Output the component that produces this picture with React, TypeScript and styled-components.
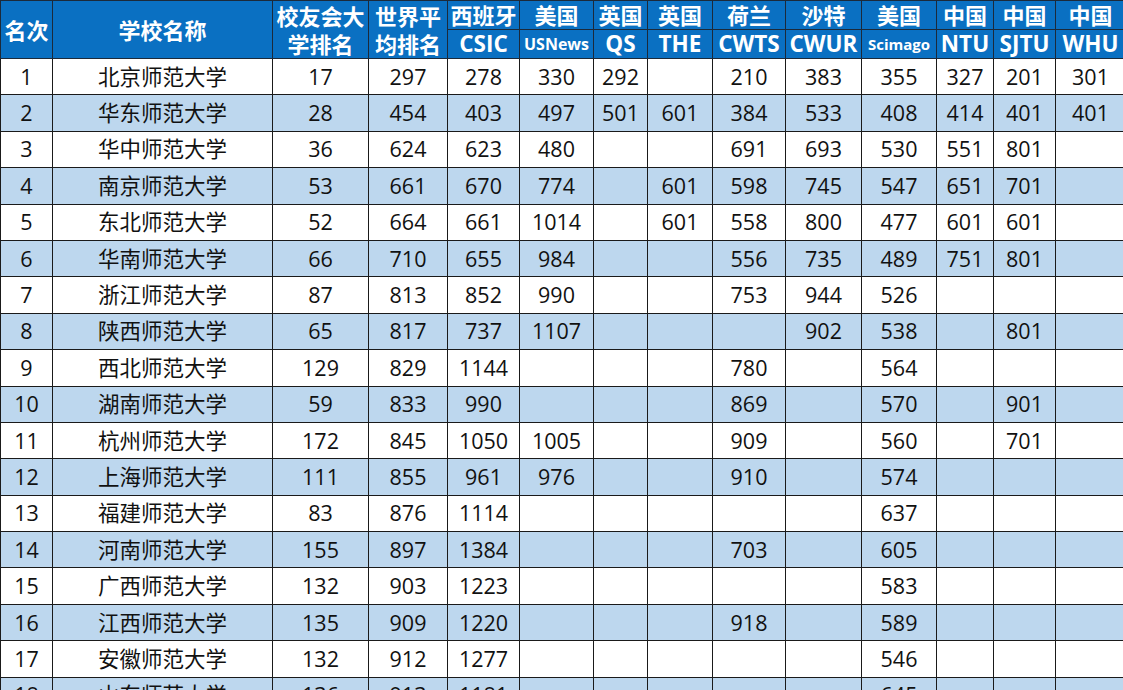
import React from "react";
import styled, { createGlobalStyle } from "styled-components";

const Global = createGlobalStyle`
  html, body { margin: 0; padding: 0; background: #fff; overflow: hidden; }
  body { font-family: "Open Sans", "Noto Sans CJK SC", sans-serif; }
`;

const Frame = styled.div`
  width: 1123px;
  height: 690px;
  overflow: hidden;
`;

const Table = styled.table`
  border-collapse: collapse;
  table-layout: fixed;
  width: 1125px;
  font-family: "Open Sans", "Noto Sans CJK SC", sans-serif;
`;

const HeadRow = styled.tr`
  height: 29px;
`;

const Th = styled.th<{ $small?: number }>`
  background: #0a70c2;
  color: #fff;
  font-weight: 700;
  font-size: ${(p) => p.$small ?? 22}px;
  line-height: 26px;
  height: 28px;
  padding: 0;
  text-align: center;
  vertical-align: middle;
  border: 1px solid #1c2a3a;
  white-space: nowrap;
`;

const WrapTh = styled(Th)`
  white-space: normal;
  word-break: break-all;
  line-height: 28px;
  padding: 0 2px;
`;

const Row = styled.tr<{ $alt: boolean }>`
  height: 36.4px;
  background: ${(p) => (p.$alt ? "#bdd7ee" : "#ffffff")};
`;

const Td = styled.td`
  font-size: 21.5px;
  color: #111;
  text-align: center;
  vertical-align: middle;
  padding: 0;
  border: 1px solid #1a1a1a;
  white-space: nowrap;
  overflow: hidden;
  line-height: 30px;
`;

const widths = [52, 220, 96, 79, 72, 74, 54, 65, 73, 76, 75, 57, 62, 70];

type R = [string, string, ...(string | number)[]];

const rows: R[] = [
  ["1", "北京师范大学", 17, 297, 278, 330, 292, "", 210, 383, 355, 327, 201, 301],
  ["2", "华东师范大学", 28, 454, 403, 497, 501, 601, 384, 533, 408, 414, 401, 401],
  ["3", "华中师范大学", 36, 624, 623, 480, "", "", 691, 693, 530, 551, 801, ""],
  ["4", "南京师范大学", 53, 661, 670, 774, "", 601, 598, 745, 547, 651, 701, ""],
  ["5", "东北师范大学", 52, 664, 661, 1014, "", 601, 558, 800, 477, 601, 601, ""],
  ["6", "华南师范大学", 66, 710, 655, 984, "", "", 556, 735, 489, 751, 801, ""],
  ["7", "浙江师范大学", 87, 813, 852, 990, "", "", 753, 944, 526, "", "", ""],
  ["8", "陕西师范大学", 65, 817, 737, 1107, "", "", "", 902, 538, "", 801, ""],
  ["9", "西北师范大学", 129, 829, 1144, "", "", "", 780, "", 564, "", "", ""],
  ["10", "湖南师范大学", 59, 833, 990, "", "", "", 869, "", 570, "", 901, ""],
  ["11", "杭州师范大学", 172, 845, 1050, 1005, "", "", 909, "", 560, "", 701, ""],
  ["12", "上海师范大学", 111, 855, 961, 976, "", "", 910, "", 574, "", "", ""],
  ["13", "福建师范大学", 83, 876, 1114, "", "", "", "", "", 637, "", "", ""],
  ["14", "河南师范大学", 155, 897, 1384, "", "", "", 703, "", 605, "", "", ""],
  ["15", "广西师范大学", 132, 903, 1223, "", "", "", "", "", 583, "", "", ""],
  ["16", "江西师范大学", 135, 909, 1220, "", "", "", 918, "", 589, "", "", ""],
  ["17", "安徽师范大学", 132, 912, 1277, "", "", "", "", "", 546, "", "", ""],
  ["18", "山东师范大学", 136, 913, 1181, "", "", "", "", "", 645, "", "", ""],
];

const top = ["西班牙", "美国", "英国", "英国", "荷兰", "沙特", "美国", "中国", "中国", "中国"];
const bottom: [string, number?][] = [
  ["CSIC", 22.5],
  ["USNews", 16],
  ["QS", 22.5],
  ["THE", 22.5],
  ["CWTS", 22.5],
  ["CWUR", 22.5],
  ["Scimago", 15],
  ["NTU", 22.5],
  ["SJTU", 22.5],
  ["WHU", 22.5],
];

export default function App() {
  return (
    <Frame>
      <Global />
      <Table>
        <colgroup>
          {widths.map((w, i) => (
            <col key={i} style={{ width: w }} />
          ))}
        </colgroup>
        <thead>
          <HeadRow>
            <Th rowSpan={2}>名次</Th>
            <Th rowSpan={2}>学校名称</Th>
            <WrapTh rowSpan={2}>校友会大学排名</WrapTh>
            <WrapTh rowSpan={2}>世界平均排名</WrapTh>
            {top.map((t, i) => (
              <Th key={i}>{t}</Th>
            ))}
          </HeadRow>
          <HeadRow>
            {bottom.map(([t, s], i) => (
              <Th key={i} $small={s}>
                {t}
              </Th>
            ))}
          </HeadRow>
        </thead>
        <tbody>
          {rows.map((r, i) => (
            <Row key={i} $alt={i % 2 === 1}>
              {r.map((c, j) => (
                <Td key={j}>{c}</Td>
              ))}
            </Row>
          ))}
        </tbody>
      </Table>
    </Frame>
  );
}
